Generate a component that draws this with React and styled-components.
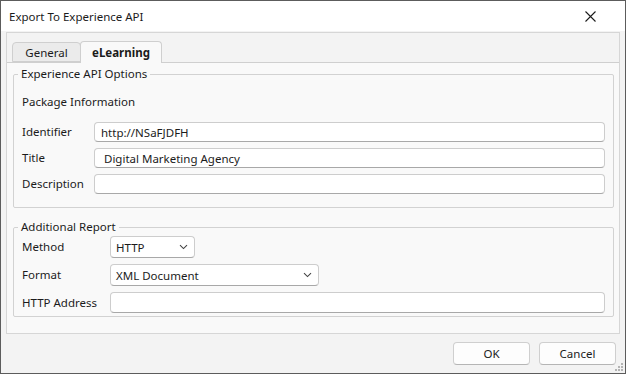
import styled, { createGlobalStyle } from 'styled-components'

const GlobalStyle = createGlobalStyle`
  * { box-sizing: border-box; }
  html, body { margin: 0; padding: 0; background: #ffffff; }
  body {
    font-family: "Noto Sans", "Open Sans", sans-serif;
    font-size: 11.5px;
    color: #1b1b1b;
  }
`

const Window = styled.div`
  position: relative;
  display: flex;
  flex-direction: column;
  width: 626px;
  height: 374px;
  border: 1px solid #5c5c5c;
  background: #f3f3f3;
`

const TitleBar = styled.div`
  display: flex;
  align-items: center;
  justify-content: space-between;
  height: 30px;
  padding: 0 29px 0 8px;
  background: #ffffff;
`

const Close = styled.button`
  display: flex;
  align-items: center;
  justify-content: center;
  width: 12px;
  height: 12px;
  padding: 0;
  border: none;
  background: none;
  color: #1b1b1b;
`

const Body = styled.div`
  display: flex;
  flex: 1;
  flex-direction: column;
  padding: 1px 5px 0 5px;
`

const TabFrame = styled.div`
  display: flex;
  flex-direction: column;
  height: 302px;
  border: 1px solid #d6d6d6;
  background: #f3f3f3;
`

const TabStrip = styled.div`
  display: flex;
  align-items: flex-end;
  height: 29px;
  padding-left: 5px;
`

const Tab = styled.div`
  position: relative;
  display: flex;
  align-items: center;
  justify-content: center;
  width: ${p => p.$width}px;
  height: ${p => (p.$active ? 22 : 20)}px;
  margin-bottom: ${p => (p.$active ? -1 : 0)}px;
  margin-left: ${p => (p.$active ? -1 : 0)}px;
  border: 1px solid #cfcfcf;
  border-bottom: ${p => (p.$active ? 'none' : '1px solid #cfcfcf')};
  border-radius: 4px 4px 0 0;
  background: ${p => (p.$active ? '#f9f9f9' : '#ebebeb')};
  font-weight: ${p => (p.$active ? 700 : 400)};
  z-index: ${p => (p.$active ? 1 : 0)};
`

const Panel = styled.div`
  display: flex;
  flex: 1;
  flex-direction: column;
  gap: 11px;
  padding: 3px 5px 0 6px;
  border-top: 1px solid #cfcfcf;
  background: #f9f9f9;
`

const Group = styled.fieldset`
  display: flex;
  flex-direction: column;
  gap: ${p => p.$gap}px;
  margin: 0;
  padding: ${p => p.$pad};
  border: 1px solid #d2d2d2;
  border-radius: 2px;
  min-width: 0;
`

const Legend = styled.legend`
  padding: 0 3px;
  margin-left: -4px;
  line-height: 16px;
`

const Heading = styled.div`
  line-height: 16px;
  margin-bottom: 6px;
`

const Row = styled.div`
  display: grid;
  grid-template-columns: ${p => p.$label}px 1fr;
  align-items: center;
`

const Label = styled.label`
  line-height: 16px;
  white-space: nowrap;
`

const TextBox = styled.input`
  width: 100%;
  height: ${p => p.$h || 20}px;
  padding: 0 6px;
  border: 1px solid #cdcdcd;
  border-bottom-color: #a8a8a8;
  border-radius: 4px;
  background: #ffffff;
  font: inherit;
  color: inherit;
  outline: none;
`

const Select = styled.div`
  display: flex;
  align-items: center;
  justify-content: space-between;
  width: ${p => p.$width}px;
  height: 22px;
  padding: 0 6px 0 5px;
  border: 1px solid #cdcdcd;
  border-bottom-color: #a8a8a8;
  border-radius: 4px;
  background: #ffffff;
`

const Footer = styled.div`
  display: flex;
  align-items: center;
  justify-content: flex-end;
  gap: 9px;
  flex: 1;
  padding-right: 9px;
`

const Button = styled.button`
  width: 77px;
  height: 23px;
  border: 1px solid #cfcfcf;
  border-bottom-color: #b5b5b5;
  border-radius: 4px;
  background: #fdfdfd;
  font: inherit;
  color: inherit;
`

const Grip = styled.svg`
  position: absolute;
  right: 2px;
  bottom: 2px;
`

const Chevron = () => (
  <svg width="9" height="6" viewBox="0 0 9 6">
    <path d="M1 1.2 L4.5 4.6 L8 1.2" fill="none" stroke="#444" strokeWidth="1.1" />
  </svg>
)

export default function App() {
  return (
    <>
      <GlobalStyle />
      <Window>
        <TitleBar>
          <span>Export To Experience API</span>
          <Close aria-label="Close">
            <svg width="11" height="11" viewBox="0 0 11 11">
              <path d="M0.5 0.5 L10.5 10.5 M10.5 0.5 L0.5 10.5" stroke="#1b1b1b" strokeWidth="1.1" />
            </svg>
          </Close>
        </TitleBar>

        <Body>
          <TabFrame>
            <TabStrip>
              <Tab $width={69}>General</Tab>
              <Tab $width={82} $active>eLearning</Tab>
            </TabStrip>

            <Panel>
              <Group $gap={6} $pad="12px 8px 13px 8px">
                <Legend>Experience API Options</Legend>
                <Heading>Package Information</Heading>
                <Row $label={72}>
                  <Label>Identifier</Label>
                  <TextBox defaultValue="http://NSaFJDFH" />
                </Row>
                <Row $label={72}>
                  <Label>Title</Label>
                  <TextBox defaultValue=" Digital Marketing Agency" />
                </Row>
                <Row $label={72}>
                  <Label>Description</Label>
                  <TextBox defaultValue="" />
                </Row>
              </Group>

              <Group $gap={6} $pad="1px 8px 3px 8px">
                <Legend>Additional Report</Legend>
                <Row $label={88}>
                  <Label>Method</Label>
                  <Select $width={85}>
                    <span>HTTP</span>
                    <Chevron />
                  </Select>
                </Row>
                <Row $label={88}>
                  <Label>Format</Label>
                  <Select $width={209}>
                    <span>XML Document</span>
                    <Chevron />
                  </Select>
                </Row>
                <Row $label={88}>
                  <Label>HTTP Address</Label>
                  <TextBox $h={21} defaultValue="" />
                </Row>
              </Group>
            </Panel>
          </TabFrame>
        </Body>

        <Footer>
          <Button>OK</Button>
          <Button>Cancel</Button>
        </Footer>

        <Grip width="8" height="8" viewBox="0 0 8 8">
          <g fill="#b4b4b4">
            <rect x="6" y="0" width="2" height="2" />
            <rect x="3" y="3" width="2" height="2" />
            <rect x="6" y="3" width="2" height="2" />
            <rect x="0" y="6" width="2" height="2" />
            <rect x="3" y="6" width="2" height="2" />
            <rect x="6" y="6" width="2" height="2" />
          </g>
        </Grip>
      </Window>
    </>
  )
}
